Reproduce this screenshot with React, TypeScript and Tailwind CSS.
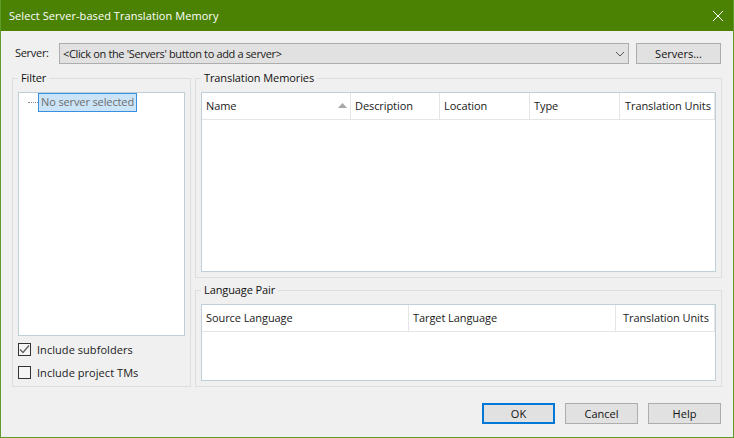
import React from "react";

function Btn({ label, primary, w }: { label: string; primary?: boolean; w: string }) {
  return (
    <button
      className={
        primary
          ? `${w} h-[21px] bg-[#e1e1e1] border-2 border-[#0078d7] text-[11px] leading-[15px] text-[#111]`
          : `${w} h-[21px] bg-[#e1e1e1] border border-[#adadad] text-[11px] leading-[17px] pb-[1px] text-[#111]`
      }
    >
      {label}
    </button>
  );
}

function Head({ label, w, pad = "pl-[4px]", sort }: { label: string; w: string; pad?: string; sort?: boolean }) {
  return (
    <div className={`${w} shrink-0 h-full flex items-center justify-between border-r border-[#e5e5e5] ${pad} text-[11px] tracking-[-0.08px] text-[#1a1a1a] whitespace-nowrap`}>
      <span>{label}</span>
      {sort && (
        <svg width="9" height="5" viewBox="0 0 9 5" className="mr-[3px] mb-[2px]">
          <path d="M0 5 L4.5 0 L9 5 Z" fill="#a8a8a8" />
        </svg>
      )}
    </div>
  );
}

function Group({ title, className, children }: { title: string; className: string; children: React.ReactNode }) {
  return (
    <fieldset className={`border border-[#dcdfe0] px-[5px] pt-[7px] flex flex-col min-w-0 ${className}`}>
      <legend className="px-[3px] text-[11px] leading-[14px] tracking-[-0.1px] text-[#111] whitespace-nowrap">
        {title}
      </legend>
      {children}
    </fieldset>
  );
}

function Check({ label, checked }: { label: string; checked?: boolean }) {
  return (
    <label className="flex items-center h-[13px] gap-[6px] text-[11px] tracking-[0.05px] text-[#1a1a1a] whitespace-nowrap">
      <span className="w-[13px] h-[13px] border border-[#333] bg-[#f5f5f5] flex items-center justify-center shrink-0">
        {checked && (
          <svg width="11" height="11" viewBox="0 0 11 11" fill="none">
            <path d="M1 5.5 L4 8.5 L10 1.5" stroke="#606060" strokeWidth="1.3" />
          </svg>
        )}
      </span>
      <span className="pt-[2px]">{label}</span>
    </label>
  );
}

export default function App() {
  return (
    <div
      className="w-[734px] h-[438px] flex flex-col bg-[#f0f0f0] border-x border-b border-[#5f9a2c] overflow-hidden"
      style={{ fontFamily: '"Open Sans", "Noto Sans", sans-serif' }}
    >
      <div className="h-[31px] shrink-0 bg-[#4b8203] flex items-center justify-between pl-[8px] pr-[9px] text-white">
        <span className="text-[11px] tracking-[0.07px] pt-[1px]">Select Server-based Translation Memory</span>
        <svg width="12" height="12" viewBox="0 0 12 12" fill="none">
          <path d="M1 1 L11 11 M11 1 L1 11" stroke="#fff" strokeWidth="1" />
        </svg>
      </div>

      <div className="flex-1 flex flex-col pl-[11px] pr-[11px] pt-[12px]">
        <div className="flex items-center h-[21px] pl-[3px] pr-[1px]">
          <span className="w-[44px] shrink-0 text-[11px] tracking-[-0.3px] text-[#1a1a1a]">Server:</span>
          <div className="w-[570px] h-[21px] bg-[#e1e1e1] border border-[#adadad] flex items-center justify-between pl-[3px] pr-[3px] text-[11px] tracking-[-0.35px] text-[#1a1a1a]">
            <span className="pt-[1px]">&lt;Click on the 'Servers' button to add a server&gt;</span>
            <svg width="10" height="6" viewBox="0 0 10 6" fill="none">
              <path d="M1 1 L5 5 L9 1" stroke="#555" strokeWidth="1" />
            </svg>
          </div>
          <div className="ml-[7px] flex">
            <Btn label="Servers..." w="w-[85px]" />
          </div>
        </div>

        <div className="mt-[7px] h-[316px] flex gap-[4px]">
          <Group title="Filter" className="w-[179px] pb-[7px]">
            <div className="flex-1 bg-white border border-[#bfcfd8] relative">
              <div className="flex items-center pl-[9px] h-[18px]">
                <span className="w-[10px] border-t border-dotted border-[#888]" />
                <span className="h-[19px] w-[99px] border border-[#3a90e0] bg-[#cce4f7] pl-[2px] text-[11px] tracking-[-0.12px] leading-[15px] text-[#6d6d6d] whitespace-nowrap">
                  No server selected
                </span>
              </div>
            </div>
            <div className="mt-[7px] flex flex-col gap-[10px]">
              <Check label="Include subfolders" checked />
              <Check label="Include project TMs" />
            </div>
          </Group>

          <div className="w-[527px] flex flex-col gap-[5px]">
            <Group title="Translation Memories" className="pb-[5px]">
              <div className="h-[180px] bg-white border border-[#bfcfd8]">
                <div className="h-[27px] flex border-b border-[#e5e5e5]">
                  <Head label="Name" w="w-[149px]" sort />
                  <Head label="Description" w="w-[89px]" />
                  <Head label="Location" w="w-[90px]" />
                  <Head label="Type" w="w-[90px]" />
                  <Head label="Translation Units" w="w-[95px]" pad="pl-[5px]" />
                </div>
              </div>
            </Group>
            <Group title="Language Pair" className="flex-1 pb-[5px]">
              <div className="flex-1 bg-white border border-[#bfcfd8]">
                <div className="h-[27px] flex border-b border-[#e5e5e5]">
                  <Head label="Source Language" w="w-[207px]" />
                  <Head label="Target Language" w="w-[207px]" />
                  <Head label="Translation Units" w="w-[99px]" pad="pl-[7px]" />
                </div>
              </div>
            </Group>
          </div>
        </div>

        <div className="mt-[16px] flex justify-end gap-[10px] pr-[1px]">
          <Btn label="OK" primary w="w-[73px]" />
          <Btn label="Cancel" w="w-[73px]" />
          <Btn label="Help" w="w-[73px]" />
        </div>
      </div>
    </div>
  );
}
